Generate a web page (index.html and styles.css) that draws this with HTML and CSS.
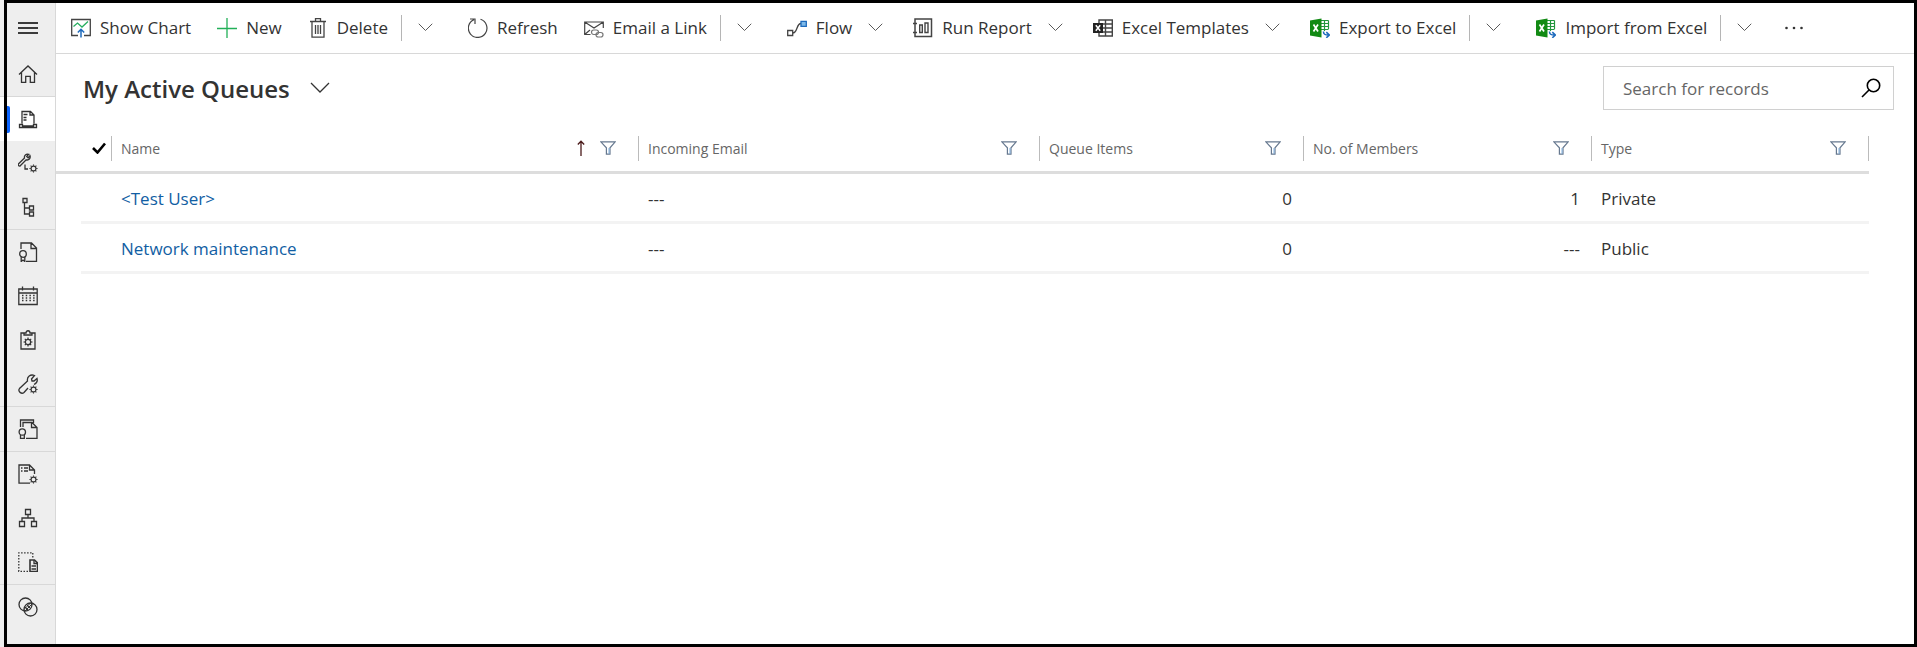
FILE: index.html
```html
<!DOCTYPE html>
<html lang="en">
<head>
<meta charset="utf-8">
<title>My Active Queues</title>
<link rel="stylesheet" href="styles.css">
</head>
<body>
<svg class="defs" aria-hidden="true">
  <symbol id="chev" viewBox="0 0 20 12"><path d="M1 1l9 9 9-9" fill="none" stroke="currentColor" stroke-width="1.3"/></symbol>
  <symbol id="filter" viewBox="0 0 16 14"><path d="M.8.8h14.4L10 6.8v6.4H6.400V6.800z" fill="#fff" stroke="#66788f" stroke-width="1.200"/><path d="M9 7v5.800" stroke="#7fb0e0"/></symbol>
  <symbol id="gear" viewBox="0 0 10 10"><circle cx="5" cy="5" r="2.700" fill="none" stroke="currentColor" stroke-width="1.300"/><path d="M5 .5v1.500M5 8v1.500M.5 5h1.500M8 5h1.500M1.800 1.800l1.100 1.100M7.100 7.100l1.100 1.100M8.200 1.800L7.100 2.900M2.900 7.100L1.800 8.200" stroke="currentColor" stroke-width="1.200"/></symbol>
  <symbol id="excel" viewBox="0 0 20 20"><path d="M10 2h8.500v13H10z" fill="#fff"/><path d="M11 2.500h7.500M11 5.500h7.500M11 8.500h7.500M11 11.500h7.500M14.500 2.500V13M18.500 2.500V11" stroke="#22963c" stroke-width="1.200"/><path d="M0 2.500L11.500.5v19L0 17.500z" fill="#128a14"/><path d="M3.500 6.500l4.500 7M8 6.500l-4.500 7" stroke="#fff" stroke-width="1.700"/><path d="M13.500 13.500c0 3 1.500 3.500 5 3.500M16.300 14.200l3 2.800-3 2.800" fill="none" stroke="#1e6bbd" stroke-width="1.600"/></symbol>
</svg>
<div class="app">
  <nav class="rail" aria-label="Site map">
    <button class="rail-item rail-menu" aria-label="Menu"><svg viewBox="0 0 20 20"><path d="M0 5h20M0 10h20M0 15h20" stroke="#000"/></svg></button>
    <div class="rail-group">
      <a class="rail-item" href="#" aria-label="Home"><svg viewBox="0 0 20 20"><path d="M1 10.500L10 2l9 8.500M3.500 8.500v9.800h4.200v-6h4.600v6h4.200V8.500"/></svg></a>
    </div>
    <div class="rail-group">
      <a class="rail-item current" href="#" aria-label="Queues"><svg viewBox="0 0 20 20"><path d="M4 14.500V2.500h8.500L16 6v8.500M12 2.500V6h4M1.500 15.500h3v1.500h11v-1.500h3v3h-17z"/><path d="M5.500 5.500h4M5.500 8.500h3M5.500 11h3" stroke-width="1.600"/></svg></a>
      <a class="rail-item" href="#" aria-label="Service settings"><svg viewBox="0 0 20 20"><path d="M.8 12.800a1.300 1.300 0 0 1-.2-2L6.500 5c-.6-2.500 1.500-4.500 4.300-3.700L8.700 3.400l1.400 1.400 1.900-2c.8 2.500-1.200 4.800-3.800 4L2.500 12.500c-.5.600-1.200.7-1.700.300zM7 11.500v4.500h3"/><use href="#gear" x="11" y="11" width="9" height="9"/></svg></a>
      <a class="rail-item" href="#" aria-label="Subjects"><svg viewBox="0 0 20 20"><path d="M5 1.500h4v4H5zM11.500 9h4v4h-4zM11.500 15h4v4h-4zM6.500 5.500V17h5M6.500 11h5"/></svg></a>
    </div>
    <div class="rail-group">
      <a class="rail-item" href="#" aria-label="Contracts"><svg viewBox="0 0 20 20"><path d="M3 7V1h10.500L18.500 6v13.500H8M13 1v5.500h5.500"/><circle cx="5" cy="12" r="3.300"/><path d="M3.200 15v4.500L5 18l1.800 1.500V15"/></svg></a>
      <a class="rail-item" href="#" aria-label="Calendar"><svg viewBox="0 0 20 20"><path d="M.8 3h18.400v15.500H.8zM.8 7h18.400M4.500.5v4M15.500.5v4"/><path d="M4 9.500h13M4 12h13M4 14.500h13" stroke-dasharray="1.500 2.200" stroke-width="1.500"/></svg></a>
      <a class="rail-item" href="#" aria-label="Service level agreements"><svg viewBox="0 0 20 20"><path d="M6 3H3v16h14V3h-3M6 5V3h2c0-3 4-3 4 0h2v2z"/><use href="#gear" x="5" y="7" width="10" height="10"/></svg></a>
      <a class="rail-item" href="#" aria-label="Maintenance"><svg viewBox="0 0 20 20"><path d="M6 18.500c-2.500 2-6.500-1-4.500-4L9.500 7c-.8-4.500 3-7 7-5.500L13.500 5l.5 2h2l3-2.500c.8 3-.5 5-3 6M6 18.500l4-4.500"/><use href="#gear" x="11" y="11" width="9" height="9"/></svg></a>
    </div>
    <div class="rail-group">
      <a class="rail-item" href="#" aria-label="Entitlements"><svg viewBox="0 0 20 20"><path d="M2.500 8V1h13v3M5 8V3.500h9L19 8.500v11H8M13.500 3.500v5H19"/><circle cx="4.300" cy="13" r="3.200"/><path d="M2.500 16v3.500h3.800V16"/></svg></a>
    </div>
    <div class="rail-group">
      <a class="rail-item" href="#" aria-label="Templates"><svg viewBox="0 0 20 20"><path d="M12 19.200H1V1h10.500L16.500 6v4M11.500 1v5h5"/><path d="M3 4h1.500M6 4h4M3 7h1.500M6 7h4" stroke-width="1.500"/><use href="#gear" x="11" y="11" width="9" height="9"/></svg></a>
      <a class="rail-item" href="#" aria-label="Hierarchy"><svg viewBox="0 0 20 20"><path d="M7.500 1.500h5v5h-5zM1.500 13.500h5v5h-5zM13.500 13.500h5v5h-5zM10 6.500V10M4 13.500V10h12v3.500"/></svg></a>
      <a class="rail-item" href="#" aria-label="Documents"><svg viewBox="0 0 20 20"><path d="M10 19.300H.8V.8h14V7" stroke-dasharray="1.500 1.500"/><path d="M12 8h4.500L19.500 11v8.500H12z" stroke-width="1.600"/><path d="M13.500 14h4.500M13.500 17h4.500M16 8v3.500h3.500"/></svg></a>
    </div>
    <div class="rail-group">
      <a class="rail-item" href="#" aria-label="Relationships"><svg viewBox="0 0 20 20"><circle cx="7.500" cy="7.500" r="6.500"/><circle cx="12.500" cy="12.500" r="6.500"/><path d="M6 12.500L12.500 6M7 14L14 7M9 8l4 4M7 10l3 3" stroke-width="1"/></svg></a>
    </div>
  </nav>
  <main class="main">
    <div class="commands" role="toolbar" aria-label="Commands">
      <button class="cmd"><svg viewBox="0 0 20 20"><path d="M7 17.500H.7V1.500h18.600v16H13" fill="none" stroke="#444" stroke-width="1.300"/><path d="M2.500 8.500l4-3.500 4.500 4L17 3.500" fill="none" stroke="#27ae60" stroke-width="1.300"/><path d="M10 19.500v-8M6.800 14.500l3.200-3.200 3.200 3.200" fill="none" stroke="#1e6bbd" stroke-width="1.500"/></svg>Show Chart</button>
      <button class="cmd"><svg viewBox="0 0 20 20"><path d="M10 0v20M0 10.500h20" stroke="#22b058" stroke-width="1.300"/></svg>New</button>
      <button class="cmd"><svg viewBox="0 0 20 20"><path d="M2 3.500h16M7.500 3.500v-3h5v3M4 3.500v15.700h12V3.500M7.500 7v9M10 7v9M12.500 7v9" fill="none" stroke="#444" stroke-width="1.300"/></svg>Delete</button>
      <button class="more split" aria-label="Delete options"><svg><use href="#chev"/></svg></button>
      <button class="cmd"><svg viewBox="0 0 20 20"><path d="M12.500 1.300A9.300 9.300 0 1 1 6 1.600M2 1h5v5" fill="none" stroke="#444" stroke-width="1.200"/></svg>Refresh</button>
      <button class="cmd"><svg viewBox="0 0 20 20"><path d="M6.500 16.500H.7V4h18.600v6M.7 4L10 10l9.300-6M.7 16.500L6 12" fill="none" stroke="#444" stroke-width="1.200"/><rect x="7.500" y="12" width="7" height="4.500" rx="2.200" fill="none" stroke="#777" stroke-width="1.200"/><rect x="12" y="14.500" width="7" height="4.500" rx="2.200" fill="none" stroke="#777" stroke-width="1.200"/></svg>Email a Link</button>
      <button class="more split" aria-label="Email options"><svg><use href="#chev"/></svg></button>
      <button class="cmd"><svg viewBox="0 0 20 20"><path d="M.7 12.500h5v5h-5zM5.700 15c5 0 3.500-9.500 8.300-9.500" fill="none" stroke="#444" stroke-width="1.300"/><path d="M14 3.300h5.300v5H14z" fill="#7db9e8" stroke="#1e6bbd" stroke-width="1.300"/></svg>Flow</button>
      <button class="more" aria-label="Flow options"><svg><use href="#chev"/></svg></button>
      <button class="cmd"><svg viewBox="0 0 20 20"><path d="M2 1h16.500v17.500H2zM0 5.500h4M0 14.500h4" fill="none" stroke="#444" stroke-width="1.500"/><path d="M6.700 7h2.600v7.500H6.700zM12 5h3v9.500h-3z" fill="none" stroke="#444" stroke-width="1.400"/></svg>Run Report</button>
      <button class="more" aria-label="Report options"><svg><use href="#chev"/></svg></button>
      <button class="cmd"><svg viewBox="0 0 20 20"><path d="M6 2h13.300v16H6zM6 6h13M6 10h13M6 14h13M12.500 2v16" fill="none" stroke="#444" stroke-width="1.400"/><path d="M0 5h10v10H0z" fill="#222"/><path d="M2.800 7.200l4.400 5.600M7.200 7.200l-4.400 5.600" stroke="#fff" stroke-width="1.500"/></svg>Excel Templates</button>
      <button class="more" aria-label="Template options"><svg><use href="#chev"/></svg></button>
      <button class="cmd"><svg><use href="#excel"/></svg>Export to Excel</button>
      <button class="more split" aria-label="Export options"><svg><use href="#chev"/></svg></button>
      <button class="cmd"><svg><use href="#excel"/></svg>Import from Excel</button>
      <button class="more split" aria-label="Import options"><svg><use href="#chev"/></svg></button>
      <button class="overflow" aria-label="More commands"><svg viewBox="0 0 20 4"><circle cx="2.500" cy="2" r="1.300"/><circle cx="10" cy="2" r="1.300"/><circle cx="17.500" cy="2" r="1.300"/></svg></button>
    </div>
    <header class="view">
      <h1 class="view-title">My Active Queues</h1>
      <button class="view-switch" aria-label="Select a view"><svg><use href="#chev"/></svg></button>
      <form class="search" role="search">
        <input class="search-input" type="text" placeholder="Search for records" aria-label="Search for records">
        <button class="search-go" type="button" aria-label="Search"><svg viewBox="0 0 20 20"><circle cx="12.500" cy="7.500" r="6.200"/><path d="M8 12L1 19"/></svg></button>
      </form>
    </header>
    <table class="grid">
      <colgroup><col class="c-gutter"><col class="c-check"><col class="c-name"><col class="c-mail"><col class="c-items"><col class="c-members"><col class="c-type"></colgroup>
      <thead>
        <tr>
          <td></td>
          <th scope="col" aria-label="Select all"><div class="head check"><svg viewBox="0 0 14 12"><path d="M1 6l4.500 4.500L13 1.500" fill="none" stroke="#000" stroke-width="2.600"/></svg></div></th>
          <th scope="col"><div class="head"><span>Name</span><svg class="sort" viewBox="0 0 8 16"><path d="M4 16V1.500M.8 4.500L4 1.200l3.200 3.300" fill="none" stroke="#4a1a1a" stroke-width="1.300"/></svg><button class="filter" aria-label="Filter by name"><svg><use href="#filter"/></svg></button></div></th>
          <th scope="col"><div class="head"><span>Incoming Email</span><button class="filter" aria-label="Filter by incoming email"><svg><use href="#filter"/></svg></button></div></th>
          <th scope="col"><div class="head"><span>Queue Items</span><button class="filter" aria-label="Filter by queue items"><svg><use href="#filter"/></svg></button></div></th>
          <th scope="col"><div class="head"><span>No. of Members</span><button class="filter" aria-label="Filter by members"><svg><use href="#filter"/></svg></button></div></th>
          <th scope="col"><div class="head"><span>Type</span><button class="filter" aria-label="Filter by type"><svg><use href="#filter"/></svg></button></div></th>
        </tr>
      </thead>
      <tbody>
        <tr><td></td><td></td><td><a href="#">&lt;Test User&gt;</a></td><td>---</td><td class="num">0</td><td class="num">1</td><td>Private</td></tr>
        <tr><td></td><td></td><td><a href="#">Network maintenance</a></td><td>---</td><td class="num">0</td><td class="num">---</td><td>Public</td></tr>
      </tbody>
    </table>
  </main>
  <div class="frame"></div>
</div>
</body>
</html>
```
FILE: styles.css
```css
* { box-sizing: border-box; }

body {
  margin: 0;
  font-family: "Open Sans", "Noto Sans", sans-serif;
  font-size: 17px;
  color: #333;
  background: #fff;
}

button {
  margin: 0;
  padding: 0;
  border: 0;
  background: none;
  font: inherit;
  color: inherit;
  display: flex;
  align-items: center;
}

svg { display: block; flex: none; }
.defs { position: absolute; width: 0; height: 0; }

.app {
  position: relative;
  display: flex;
  min-height: 100vh;
}

.frame {
  position: absolute;
  inset: 0 0 0 4px;
  border: 3px solid #000;
  pointer-events: none;
}

.rail {
  flex: none;
  width: 56px;
  padding-top: 3px;
  background: #eee;
  border-right: 1px solid #d8d8d8;
}

.rail-group + .rail-group { border-top: 1px solid #d8d8d8; }

.rail-item {
  position: relative;
  display: flex;
  align-items: center;
  width: 100%;
  height: 44px;
  padding-left: 18px;
  color: #333;
}

.rail-menu { height: 49px; }

.rail-item svg {
  width: 20px;
  height: 20px;
  fill: none;
  stroke: currentColor;
  stroke-width: 1.3;
}

.rail-item.current { background: #fff; }

.rail-item.current::before {
  content: "";
  position: absolute;
  left: 7px;
  top: 9px;
  width: 3px;
  height: 27px;
  border-radius: 0 2px 2px 0;
  background: #0a64ff;
}

.main { flex: 1; min-width: 0; }

.commands {
  display: flex;
  align-items: center;
  height: 54px;
  padding: 2px 0 0 2px;
  border-bottom: 1px solid #d8d8d8;
}

.cmd {
  gap: 9px;
  padding: 0 13px;
  height: 44px;
  white-space: nowrap;
}

.cmd svg { width: 20px; height: 20px; }

.more { height: 26px; padding: 0 17px 0 3px; }
.more svg { width: 15px; height: 9px; color: #555; }
.more.split { border-left: 1px solid #b5b5b5; padding: 0 22px 0 16px; }

.overflow { padding: 0 10px; }
.overflow svg { width: 20px; height: 4px; fill: #333; }

.view {
  display: flex;
  align-items: center;
  padding: 12px 23px 0 27px;
}

.view-title {
  margin: 0;
  padding-top: 2px;
  font-size: 24px;
  line-height: 42px;
  font-weight: 600;
}

.view-switch { margin-left: 20px; }
.view-switch svg { width: 20px; height: 12px; }

.search {
  display: flex;
  width: 291px;
  height: 44px;
  margin-left: auto;
  padding-right: 12px;
  border: 1px solid #d0d0d0;
}

.search-input {
  flex: 1;
  min-width: 0;
  padding: 0 0 0 19px;
  border: 0;
  outline: 0;
  background: none;
  font: inherit;
}

.search-input::placeholder { color: #666; opacity: 1; }
.search-go svg { width: 20px; height: 20px; fill: none; stroke: #000; stroke-width: 1.6; }

.grid {
  width: calc(100% - 48px);
  margin-top: 12px;
  table-layout: fixed;
  border-collapse: separate;
  border-spacing: 0;
}

.c-gutter { width: 25px; }
.c-check { width: 31px; }
.c-name { width: 527px; }
.c-mail { width: 401px; }
.c-items { width: 264px; }
.c-members { width: 288px; }
.c-type { width: 277px; }

thead th, thead td {
  height: 52px;
  padding: 3px 0 0;
  border-bottom: 3px solid #ddd;
  font-size: 14px;
  font-weight: 400;
  color: #666;
  text-align: left;
}

.head {
  display: flex;
  align-items: center;
  height: 25px;
  padding: 0 22px 0 9px;
  border-right: 1px solid #bbb;
}

.head.check { padding: 0 5px 0 0; justify-content: flex-end; }
.head.check svg { width: 14px; height: 12px; }
.head span { flex: 1; }
.sort { width: 8px; height: 16px; margin-right: 15px; }
.filter svg { width: 16px; height: 14px; }

tbody td {
  height: 50px;
  padding: 2px 10px 0 9px;
  border-bottom: 3px solid #f3f3f3;
}

tbody td:first-child { border-bottom: 0; padding: 0; }
tbody td.num { padding-right: 12px; text-align: right; }
tbody a { color: #115ea3; text-decoration: none; }
```
